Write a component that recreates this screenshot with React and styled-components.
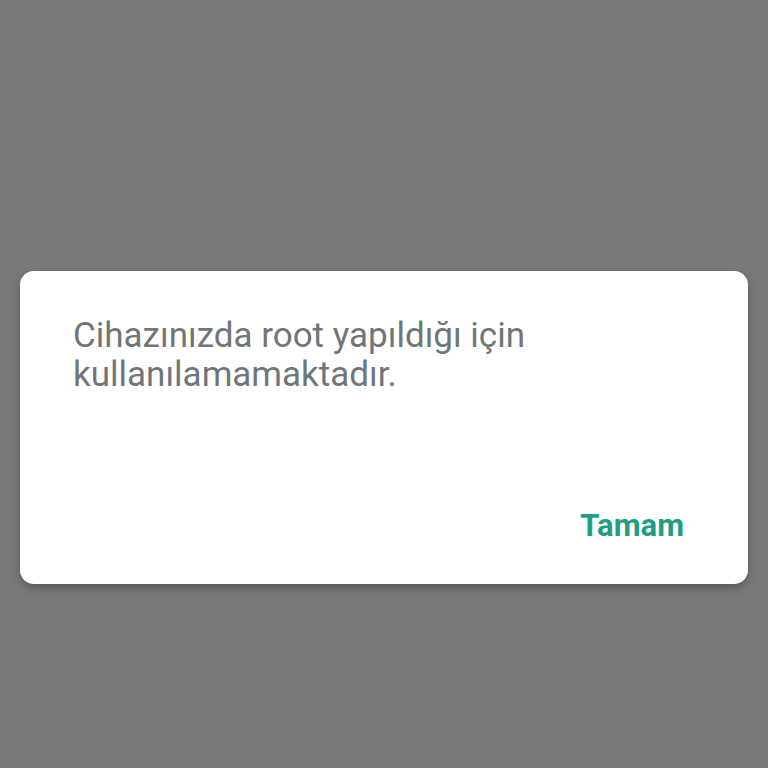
import React from "react";
import styled, { createGlobalStyle } from "styled-components";

const Global = createGlobalStyle`
  html, body { margin: 0; padding: 0; background: #7a7a7a; }
  #root { height: 768px; }
`;

const Backdrop = styled.div`
  width: 768px;
  height: 768px;
  background: #7a7a7a;
  display: flex;
  align-items: flex-start;
  justify-content: center;
  padding-top: 271px;
  box-sizing: border-box;
  font-family: Roboto, "Noto Sans", sans-serif;
`;

const Dialog = styled.div`
  width: 728px;
  height: 313px;
  box-sizing: border-box;
  background: #ffffff;
  border-radius: 14px;
  box-shadow: 0 4px 10px rgba(0, 0, 0, 0.28);
  padding: 45px 64px 0 53px;
  display: flex;
  flex-direction: column;
`;

const Message = styled.p`
  margin: 0;
  font-size: 35px;
  line-height: 39px;
  color: #707678;
  font-weight: 400;
  width: 560px;
`;

const Actions = styled.div`
  display: flex;
  justify-content: flex-end;
  margin-top: 116px;
`;

const TextButton = styled.button`
  border: none;
  background: none;
  padding: 0;
  font-family: Roboto, "Noto Sans", sans-serif;
  font-size: 31px;
  font-weight: 700;
  color: #1f9e86;
  line-height: 32px;
  cursor: pointer;
`;

export default function App() {
  return (
    <>
      <Global />
      <Backdrop>
        <Dialog>
          <Message>Cihazınızda root yapıldığı için kullanılamamaktadır.</Message>
          <Actions>
            <TextButton>Tamam</TextButton>
          </Actions>
        </Dialog>
      </Backdrop>
    </>
  );
}
